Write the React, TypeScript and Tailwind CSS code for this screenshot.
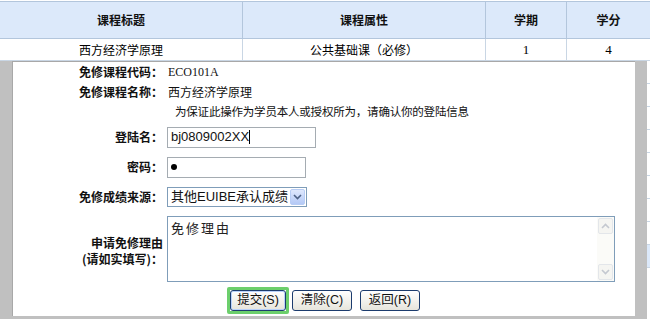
import React from 'react'

const cjk = "font-['Noto_Sans_CJK_SC',sans-serif]"
const sans = "font-['Liberation_Sans','Noto_Sans_CJK_SC',sans-serif]"

function Label({ children }: { children: React.ReactNode }) {
  return (
    <div className={`w-[150px] shrink-0 text-right text-[12px] font-bold text-[#111] ${cjk}`}>
      {children}
    </div>
  )
}

function Chevron({ up, color }: { up?: boolean; color: string }) {
  return (
    <svg width="9" height="6" viewBox="0 0 9 6">
      <path
        d={up ? 'M1 5 L4.5 1.5 L8 5' : 'M1 1 L4.5 4.5 L8 1'}
        fill="none"
        stroke={color}
        strokeWidth="1.6"
      />
    </svg>
  )
}

function XpButton({ label, focused }: { label: string; focused?: boolean }) {
  const btn = (
    <div
      className={`flex h-[21px] items-center justify-center rounded-[3px] border border-[#1c3c6e] bg-gradient-to-b from-white to-[#e6e5dc] text-[12.5px] text-[#111] ${sans} ${
        focused ? 'w-[56px] shadow-[inset_0_0_0_1px_#b9d1fa]' : 'w-[60px]'
      }`}
    >
      {label}
    </div>
  )
  if (focused) {
    return <div className="rounded-[2px] border-[3px] border-[#6ccf6c] bg-white">{btn}</div>
  }
  return btn
}

export default function App() {
  const headers = [
    { name: '课程标题', w: 'w-[242px]' },
    { name: '课程属性', w: 'w-[243px]' },
    { name: '学期', w: 'w-[81px]' },
    { name: '学分', w: 'w-[84px]' },
  ]
  const row = ['西方经济学原理', '公共基础课（必修）', '1', '4']

  return (
    <div className="h-[321px] w-[650px] overflow-hidden bg-white">
      {/* 课程表 */}
      <div className="pt-[1px]">
        <div className="flex h-[38px] border-y border-[#b3c6dc] bg-[#dce9fa]">
          {headers.map((h, i) => (
            <div
              key={h.name}
              className={`${h.w} flex items-center justify-center text-[12px] font-bold text-[#111] ${cjk} ${
                i > 0 ? 'border-l border-[#b3c6dc]' : ''
              }`}
            >
              {h.name}
            </div>
          ))}
        </div>
        <div className="flex h-[22px] border-b border-[#c9d6e4] bg-white">
          {row.map((c, i) => (
            <div
              key={i}
              className={`${headers[i].w} flex items-center justify-center text-[12px] text-black ${
                i >= 2 ? "font-['Liberation_Serif',serif] text-[13px]" : cjk
              } ${i > 0 ? 'border-l border-[#c9d6e4]' : ''}`}
            >
              {c}
            </div>
          ))}
        </div>
      </div>

      {/* 弹出层 */}
      <div className="flex">
        <div className="flex w-[647px] flex-col bg-[#c0c0c0] pb-[3px]">
          <div className="flex">
            <div className="w-[12px] shrink-0" />
            <div className="flex h-[255px] w-[623px] flex-col border-l border-t border-[#a8a8a8] bg-white">
              <div className="flex h-[20px] items-center">
                <Label>免修课程代码：</Label>
                <div className="pl-[5px] font-['Liberation_Serif',serif] text-[12px] text-[#111]">ECO101A</div>
              </div>
              <div className="flex h-[20px] items-center">
                <Label>免修课程名称：</Label>
                <div className={`pl-[5px] text-[12px] text-[#111] ${cjk}`}>西方经济学原理</div>
              </div>
              <div className="flex h-[20px] items-center">
                <div className={`pl-[162px] text-[11.5px] tracking-[-0.2px] text-[#111] ${cjk}`}>
                  为保证此操作为学员本人或授权所为，请确认你的登陆信息
                </div>
              </div>
              <div className="flex h-[30px] items-center">
                <Label>登陆名：</Label>
                <div className="ml-[4px] flex h-[21px] w-[149px] items-center border border-[#a5acb2] px-[3px]">
                  <span className={`text-[13px] text-[#111] ${sans}`}>bj0809002XX</span>
                  <span className="h-[14px] w-[1px] bg-black" />
                </div>
              </div>
              <div className="flex h-[30px] items-center">
                <Label>密码：</Label>
                <div className="ml-[4px] flex h-[21px] w-[139px] items-center border border-[#a5acb2] px-[3px]">
                  <span className="h-[6px] w-[6px] rounded-full bg-black" />
                </div>
              </div>
              <div className="flex h-[30px] items-center">
                <Label>免修成绩来源：</Label>
                <div className="ml-[4px] flex h-[20px] w-[140px] items-center border border-[#7f9db9] pl-[3px] pr-[1px]">
                  <span className={`flex-1 text-[13px] text-[#111] ${sans}`}>其他EUIBE承认成绩</span>
                  <div className="flex h-[16px] w-[15px] items-center justify-center rounded-[2px] border border-[#b8cdf5] bg-gradient-to-b from-[#dfe8fd] to-[#b4c9f6]">
                    <Chevron color="#4d6185" />
                  </div>
                </div>
              </div>
              <div className="mt-[4px] flex">
                <div className="flex h-[66px] w-[150px] shrink-0 flex-col items-end justify-center pt-[4px]">
                  <div className={`text-[12px] font-bold leading-[16px] text-[#111] ${cjk}`}>申请免修理由</div>
                  <div className={`text-[12px] font-bold leading-[16px] text-[#111] ${cjk}`}>(请如实填写)：</div>
                </div>
                <div className="ml-[4px] flex h-[66px] w-[448px] border border-[#7f9db9]">
                  <div className={`flex-1 px-[3px] pt-[1px] text-[13px] tracking-[2px] text-[#222] ${cjk}`}>免修理由</div>
                  <div className="flex w-[17px] flex-col justify-between bg-[#fbfbf8] p-[1px]">
                    <div className="flex h-[16px] items-center justify-center rounded-[2px] border border-[#e3e6ea] bg-[#f5f5f2]">
                      <Chevron up color="#c4c8d0" />
                    </div>
                    <div className="flex h-[16px] items-center justify-center rounded-[2px] border border-[#e3e6ea] bg-[#f5f5f2]">
                      <Chevron color="#c4c8d0" />
                    </div>
                  </div>
                </div>
              </div>
              <div className="mt-[5px] flex items-center gap-[3px] pl-[214px]">
                <XpButton label="提交(S)" focused />
                <XpButton label="清除(C)" />
                <div className="w-[2px]" />
                <XpButton label="返回(R)" />
              </div>
            </div>
            <div className="w-[12px] shrink-0" />
          </div>
        </div>
        <div className="flex w-[3px] flex-col bg-white">
          <div className="h-[23px] border-b border-[#c9d6e4]" />
          <div className="h-[23px] border-b border-[#c9d6e4]" />
          <div className="h-[23px] border-b border-[#c9d6e4]" />
          <div className="h-[23px] border-b border-[#c9d6e4]" />
          <div className="h-[23px] border-b border-[#c9d6e4]" />
          <div className="h-[23px] border-b border-[#c9d6e4]" />
          <div className="h-[23px] border-b border-[#c9d6e4]" />
          <div className="h-[23px] border-b border-[#c9d6e4]" />
          <div className="h-[23px] border-b border-[#c9d6e4] bg-[#dce9fa]" />
        </div>
      </div>
    </div>
  )
}
